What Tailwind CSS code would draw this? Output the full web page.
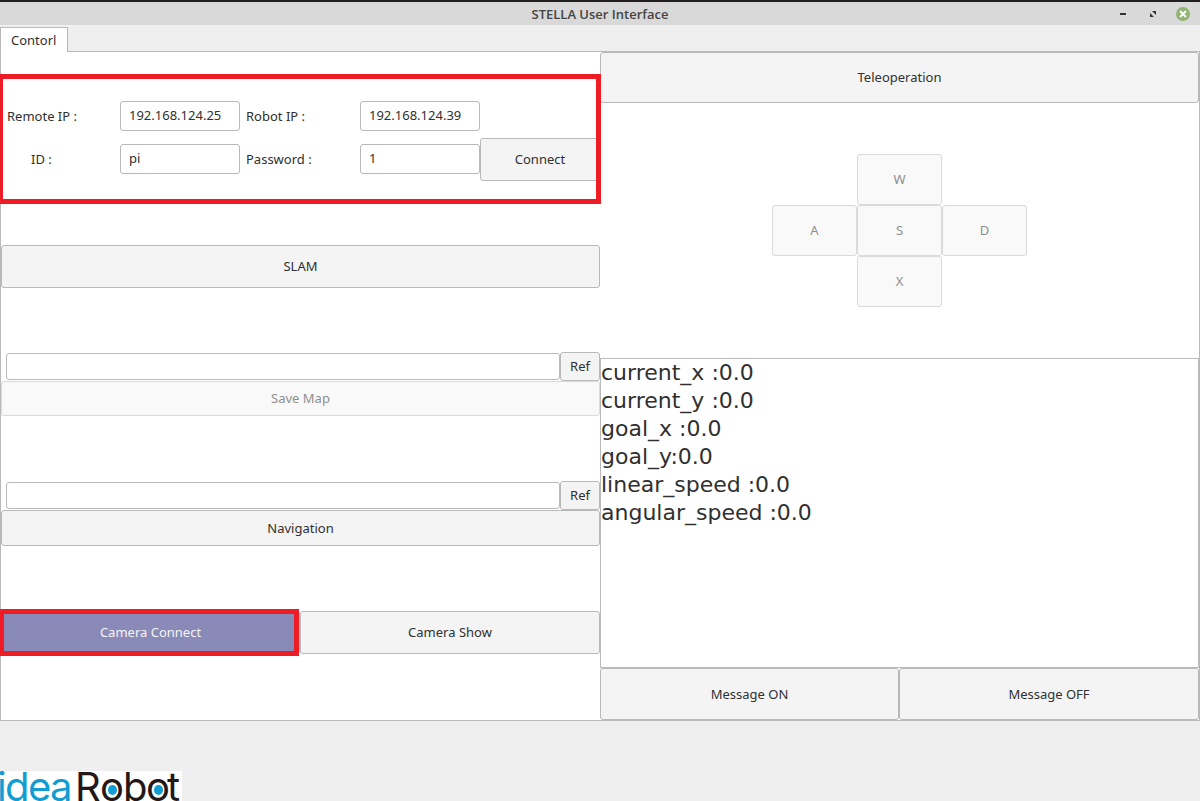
<!DOCTYPE html>
<html lang="en">
<head>
<meta charset="utf-8">
<meta name="viewport" content="width=device-width, initial-scale=1">
<title>STELLA User Interface</title>
<script src="https://cdn.jsdelivr.net/npm/@tailwindcss/browser@4"></script>
</head>
<body class="flex min-h-screen flex-col bg-[#efefef] font-['Noto_Sans',sans-serif] text-[13px] leading-5 text-[#303030]">

<header class="grid h-[25px] grid-cols-[1fr_auto_1fr] items-center border-t-2 border-[#231f20] bg-[#d9d9d9]">
  <h1 class="col-start-2 pt-px font-['Open_Sans',sans-serif] text-[13px] font-semibold text-[#444444]">STELLA User Interface</h1>
  <div class="flex items-center justify-end gap-4 pr-[10px]">
    <button aria-label="Minimize" class="size-[14px]"><svg viewBox="0 0 14 14" class="size-[14px]"><path d="M4 6h6v2H4z" fill="#333"/></svg></button>
    <button aria-label="Maximize" class="size-[14px]"><svg viewBox="0 0 14 14" class="size-[14px]"><path d="M6 4h4v4zM4 6v4h4z" fill="#333"/></svg></button>
    <button aria-label="Close" class="size-[14px]"><svg viewBox="0 0 14 14" class="size-[14px]"><circle cx="7" cy="7" r="7" fill="#92b372"/><path d="m4 4 6 6m0-6-6 6" stroke="#fff" stroke-width="2"/></svg></button>
  </div>
</header>

<nav role="tablist" class="flex pt-[2px]">
  <button role="tab" aria-selected="true" class="relative -mb-px h-[25px] border border-b-0 border-[#b9b9b9] bg-white pr-[11px] pl-[10px]">Contorl</button>
</nav>

<main class="grid grid-cols-2 border border-[#b9b9b9] bg-white">
  <div class="flex flex-col">
    <form class="relative mt-[22px] h-[130px] pt-[21px]">
      <div class="grid grid-cols-[119fr_120fr_120fr_120fr_120fr] items-center">
        <label for="remote" class="mb-px pl-[6px]">Remote IP :</label>
        <input id="remote" value="192.168.124.25" class="mb-px h-[30px] w-full rounded-[3px] border border-[#b9b9b9] bg-white px-2 pb-[2px]">
        <label for="robot" class="mb-px pl-[6px]">Robot IP :</label>
        <input id="robot" value="192.168.124.39" class="mb-px h-[30px] w-full rounded-[3px] border border-[#b9b9b9] bg-white px-2 pb-[2px]">
        <span class="h-[43px]"></span>
        <label for="user" class="mb-px pl-[30px]">ID :</label>
        <input id="user" value="pi" class="mb-px h-[30px] w-full rounded-[3px] border border-[#b9b9b9] bg-white px-2 pb-[2px]">
        <label for="pass" class="mb-px pl-[6px]">Password :</label>
        <input id="pass" value="1" class="mb-px h-[30px] w-full rounded-[3px] border border-[#b9b9b9] bg-white px-2 pb-[2px]">
        <button type="button" class="h-[43px] rounded-[3px] border border-[#b9b9b9] bg-[#f4f4f4] pb-px">Connect</button>
      </div>
      <div class="pointer-events-none absolute inset-y-0 -right-px -left-[3px] z-10 border-5 border-[#ee1c25]"></div>
    </form>

    <button class="mt-[41px] h-[43px] rounded-[3px] border border-[#b9b9b9] bg-[#f4f4f4] pb-px">SLAM</button>

    <div class="mt-16 flex items-center pl-[5px]">
      <input aria-label="Map save path" class="h-[27px] min-w-0 flex-1 rounded-[3px] border border-[#b9b9b9] bg-white px-2">
      <button class="h-[29px] w-10 rounded-[3px] border border-[#b9b9b9] bg-[#f4f4f4] pb-px">Ref</button>
    </div>
    <button disabled class="h-[35px] rounded-[3px] border border-[#dadada] bg-[#f9f9f9] pb-px text-[#8f8f8f]">Save Map</button>

    <div class="mt-[65px] flex items-center pl-[5px]">
      <input aria-label="Navigation map path" class="h-[27px] min-w-0 flex-1 rounded-[3px] border border-[#b9b9b9] bg-white px-2">
      <button class="h-[29px] w-10 rounded-[3px] border border-[#b9b9b9] bg-[#f4f4f4] pb-px">Ref</button>
    </div>
    <button class="h-9 rounded-[3px] border border-[#b9b9b9] bg-[#f4f4f4]">Navigation</button>

    <div class="mt-[65px] grid grid-cols-[299fr_300fr]">
      <div class="relative grid">
        <button class="h-[43px] rounded-[3px] border border-[#b9b9b9] bg-[#8a8ab8] pb-px text-[#f4f4f4]">Camera Connect</button>
        <div class="pointer-events-none absolute -inset-y-[2px] right-px -left-[2px] border-5 border-[#ee1c25]"></div>
      </div>
      <button class="h-[43px] rounded-[3px] border border-[#b9b9b9] bg-[#f4f4f4] pb-px">Camera Show</button>
    </div>
  </div>

  <div class="flex flex-col">
    <button class="h-[51px] rounded-[3px] border border-[#b9b9b9] bg-[#f4f4f4] pb-px">Teleoperation</button>

    <div class="my-[51px] grid auto-rows-[51px] grid-cols-[85px_85px_85px] justify-center text-[#8f8f8f]">
      <button disabled class="col-start-2 rounded-[3px] border border-[#dadada] bg-[#f9f9f9] pb-px">W</button>
      <button disabled class="col-start-1 rounded-[3px] border border-[#dadada] bg-[#f9f9f9] pb-px">A</button>
      <button disabled class="rounded-[3px] border border-[#dadada] bg-[#f9f9f9] pb-px">S</button>
      <button disabled class="rounded-[3px] border border-[#dadada] bg-[#f9f9f9] pb-px">D</button>
      <button disabled class="col-start-2 rounded-[3px] border border-[#dadada] bg-[#f9f9f9] pb-px">X</button>
    </div>

    <output class="block h-[310px] border border-[#b9b9b9] font-['DejaVu_Sans',sans-serif] text-[22px] leading-7">
      <p>current_x :0.0</p>
      <p>current_y :0.0</p>
      <p>goal_x :0.0</p>
      <p>goal_y:0.0</p>
      <p>linear_speed :0.0</p>
      <p>angular_speed :0.0</p>
    </output>

    <div class="grid grid-cols-[299fr_300fr]">
      <button class="h-[52px] rounded-[3px] border border-[#b9b9b9] bg-[#f4f4f4]">Message ON</button>
      <button class="h-[52px] rounded-[3px] border border-[#b9b9b9] bg-[#f4f4f4]">Message OFF</button>
    </div>
  </div>
</main>

<footer class="flex flex-1 items-end">
  <svg viewBox="0 0 182 30" class="h-[30px] w-[182px] bg-white font-['Inter',sans-serif] text-[40px]" role="img" aria-label="ideaRobot">
    <text y="30" x="-3 5 28 50" fill="#119dd2">idea</text>
    <text y="30" x="75 100 123 146 167" fill="#231815">Robot</text>
    <ellipse cx="112.500" cy="19" rx="4.500" ry="5" fill="#119dd2"/>
    <ellipse cx="158.500" cy="19" rx="4.500" ry="5" fill="#119dd2"/>
  </svg>
</footer>
</body>
</html>
